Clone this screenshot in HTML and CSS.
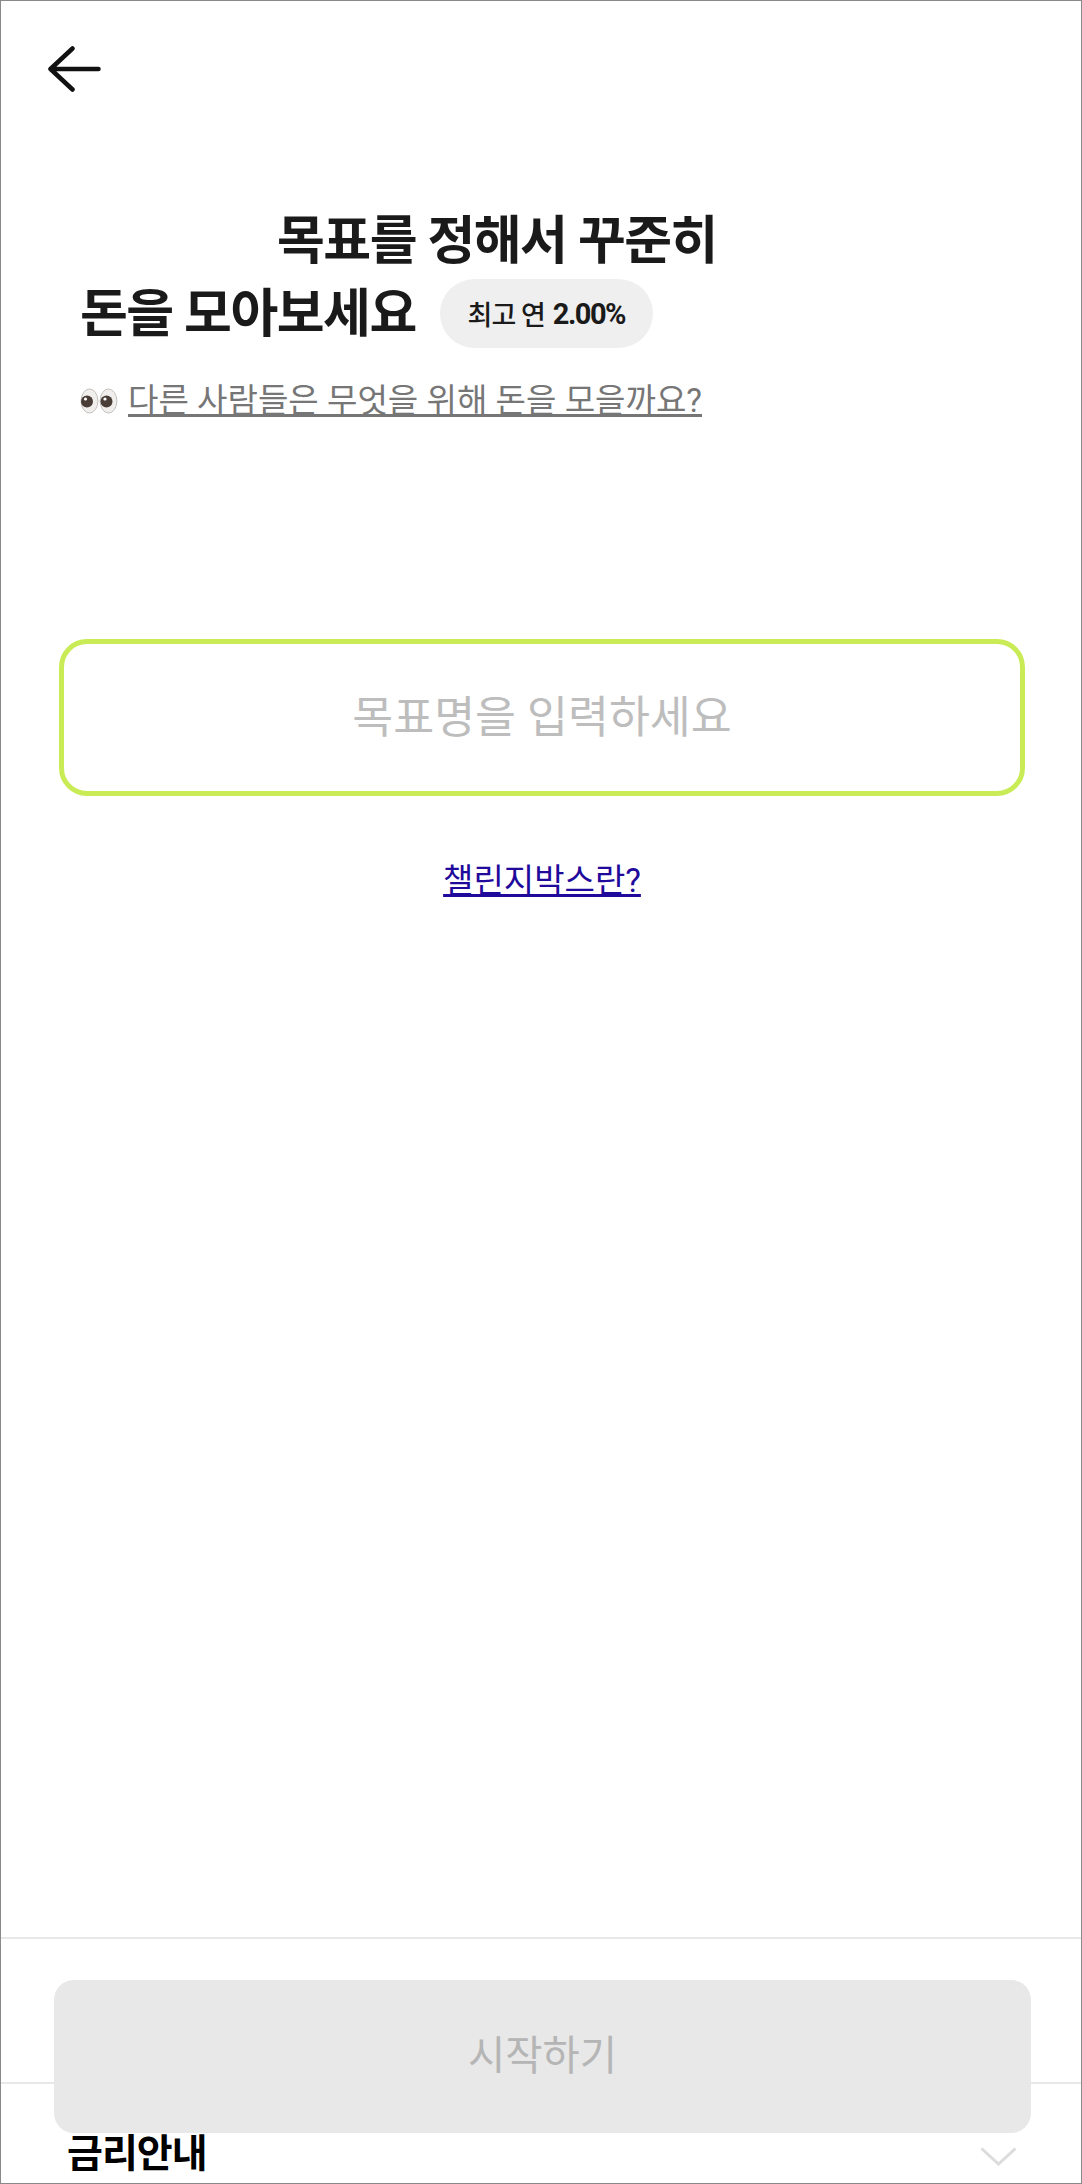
FILE: index.html
```html
<!DOCTYPE html>
<html lang="ko">

<head>
    <meta charset="UTF-8">
    <meta name="viewport" content="width=device-width, initial-scale=1.0">
    <title>챌린지박스</title>
    <link rel="stylesheet" href="styles.css">
</head>

<body>
    <div class="screen">
        <div class="topBar">
            <svg class="backIcon" width="54" height="46" viewBox="0 0 54 46">
                <path d="M25.5 2.5 L3.5 23 L25.5 43.5 M3.5 23 H51.5" />
            </svg>
        </div>

        <div class="intro">
            <h1 class="title titleFirst">목표를 정해서 꾸준히</h1>
            <div class="titleRow">
                <h1 class="title">돈을 모아보세요</h1>
                <span class="ratePill">최고 연 <b>2.00%</b></span>
            </div>
            <div class="peek">
                <svg class="eyes" width="38" height="26" viewBox="0 0 38 26">
                    <ellipse cx="9.5" cy="13" rx="8.4" ry="12" class="eyeWhite" />
                    <ellipse cx="28.5" cy="13" rx="8.4" ry="12" class="eyeWhite" />
                    <circle cx="7" cy="13.5" r="6" class="pupil" />
                    <circle cx="26.5" cy="13.5" r="6" class="pupil" />
                    <circle cx="5.5" cy="11" r="1.6" class="glint" />
                    <circle cx="25" cy="11" r="1.6" class="glint" />
                </svg>
                <a href="#" class="peekLink">다른 사람들은 무엇을 위해 돈을 모을까요?</a>
            </div>
        </div>

        <div class="goalBox">
            <input class="goalInput" type="text" placeholder="목표명을 입력하세요">
        </div>

        <div class="helpRow">
            <a href="#" class="helpLink">챌린지박스란?</a>
        </div>

        <div class="ctaBar">
            <button class="startBtn" disabled>시작하기</button>
        </div>

        <div class="rateInfo">
            <span class="rateInfoTitle">금리안내</span>
            <svg class="chevron" width="37" height="19" viewBox="0 0 37 19">
                <path d="M1.5 1.5 L18.5 17 L35.5 1.5" />
            </svg>
        </div>
    </div>
</body>

</html>
```

FILE: styles.css
```css
* {
    margin: 0;
    padding: 0;
    box-sizing: border-box;
    font-family: Roboto, "Noto Sans CJK KR", sans-serif;
}

body {
    background-color: #fff;
}

.screen {
    display: flex;
    flex-direction: column;
    width: 1082px;
    height: 2184px;
    border: 1px solid #8a8a8a;
    overflow: hidden;
}

.topBar {
    height: 204px;
    padding: 45px 0 0 46px;
}

.backIcon {
    display: block;
    fill: none;
    stroke: #111;
    stroke-width: 4.5;
    stroke-linecap: round;
    stroke-linejoin: round;
}

.intro {
    padding-left: 79px;
}

.title {
    font-size: 52px;
    line-height: 73px;
    font-weight: 700;
    letter-spacing: -1.5px;
    color: #1a1a1a;
}

.titleFirst {
    padding-left: 197px;
}

.titleRow {
    display: flex;
    align-items: center;
    gap: 24px;
}

.ratePill {
    display: flex;
    align-items: center;
    justify-content: center;
    gap: 8px;
    width: 213px;
    height: 69px;
    margin-top: -2px;
    border-radius: 35px;
    background-color: #efefef;
    font-size: 27px;
    font-weight: 500;
    letter-spacing: -1px;
    color: #1a1a1a;
}

.ratePill b {
    font-size: 29px;
    font-weight: 700;
    letter-spacing: -1.5px;
}

.peek {
    display: flex;
    align-items: center;
    gap: 10px;
    margin-top: 28px;
}

.eyes {
    display: block;
    flex: none;
}

.eyeWhite {
    fill: #f1efed;
    stroke: #c4c0bc;
    stroke-width: 1;
}

.pupil {
    fill: #4a3d38;
}

.glint {
    fill: #fff;
}

.peekLink {
    font-size: 33.1px;
    line-height: 44px;
    color: #767676;
}

.goalBox {
    margin: 216px 56px 0 58px;
}

.goalInput {
    display: block;
    width: 100%;
    height: 157px;
    border: 5px solid #c9ec56;
    border-radius: 28px;
    outline: none;
    background-color: #fff;
    text-align: center;
    font-size: 44.5px;
}

.goalInput::placeholder {
    color: #bdbdbd;
    opacity: 1;
}

.helpRow {
    flex: 1;
    padding: 63px 0 0 2px;
    text-align: center;
}

.helpLink {
    font-size: 33px;
    line-height: 44px;
    color: #1f0a9c;
}

.ctaBar {
    height: 145px;
    padding: 41px 50px 0 53px;
    border-top: 2px solid #e8e8e8;
}

.startBtn {
    position: relative;
    z-index: 1;
    display: block;
    width: 100%;
    height: 153px;
    padding-bottom: 8px;
    border: none;
    border-radius: 20px;
    background-color: #e8e8e8;
    font-size: 40.5px;
    color: #b5b5b5;
}

.rateInfo {
    display: flex;
    align-items: center;
    justify-content: space-between;
    height: 101px;
    padding: 32px 64px 0 66px;
    border-top: 2px solid #e8e8e8;
}

.rateInfoTitle {
    font-size: 39px;
    font-weight: 700;
    letter-spacing: -1px;
    color: #000;
}

.chevron {
    display: block;
    margin-top: 14px;
    fill: none;
    stroke: #dcdcdc;
    stroke-width: 3;
}
```
